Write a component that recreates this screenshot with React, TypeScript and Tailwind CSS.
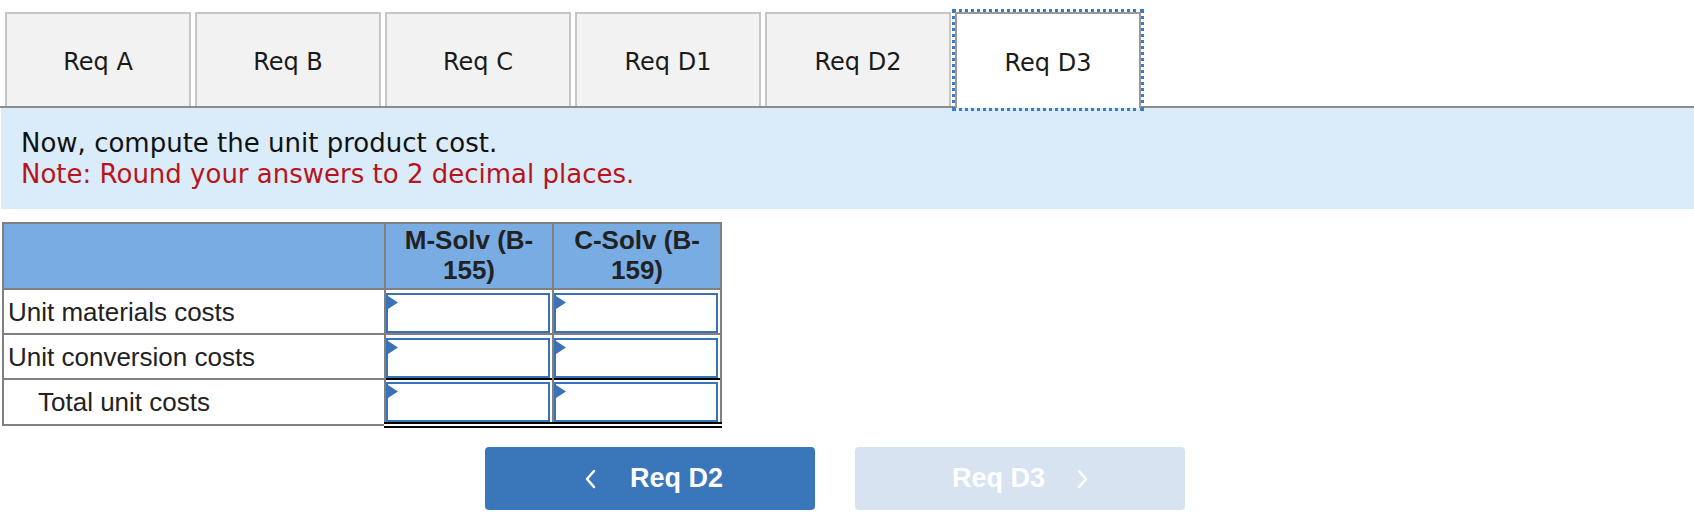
import React from "react";

const tabs = ["Req A", "Req B", "Req C", "Req D1", "Req D2", "Req D3"];

function Triangle() {
  return (
    <svg className="absolute left-0 top-[1px]" width="10" height="13" viewBox="0 0 10 13">
      <polygon points="0,0 10,6.5 0,13" fill="#3a72b8" />
    </svg>
  );
}

function InputCell({ bottom }: { bottom: "grey" | "black" | "double" }) {
  const b =
    bottom === "grey"
      ? "border-b-2 border-b-[#808080]"
      : bottom === "black"
      ? "border-b-2 border-b-black"
      : "border-b-[6px] border-double border-b-black";
  return (
    <td className={`p-0 border-x-2 border-x-[#808080] ${b}`}>
      <div className="pl-0 pr-[2px] pt-[2px] pb-0">
        <div className="relative h-[40px] border-2 border-[#3a72b8] bg-white">
          <Triangle />
        </div>
      </div>
    </td>
  );
}

export default function App() {
  return (
    <div className="w-[1694px] h-[526px] bg-white font-['DejaVu_Sans',sans-serif] overflow-hidden">
      {/* Tab bar */}
      <div className="flex gap-[4px] pl-[5px] pt-[12px] h-[108px] border-b-2 border-[#8c8c8c]">
        {tabs.map((t) => {
          const active = t === "Req D3";
          return (
            <div
              key={t}
              className={
                active
                  ? "w-[186px] h-[96px] mb-[-2px] bg-white border-2 border-b-0 border-[#999999] flex items-center justify-center text-[24px] text-[#1a1a1a] outline-[3px] outline-dotted outline-[#3a7bc8] outline-offset-[0px] relative z-10"
                  : "w-[186px] h-[94px] bg-[#f2f2f2] border-2 border-b-0 border-[#c6c6c6] flex items-center justify-center text-[24px] text-[#1a1a1a]"
              }
            >
              <span className="pt-[4px]">{t}</span>
            </div>
          );
        })}
      </div>

      {/* Instructions */}
      <div className="ml-[1px] bg-[#daebf9] pl-[20px] pt-[20px] pb-[19px] text-[26px] leading-[31px]">
        <div className="text-[#111111]">Now, compute the unit product cost.</div>
        <div className="text-[#b8141b]">Note: Round your answers to 2 decimal places.</div>
      </div>

      {/* Table */}
      <div className="pl-[2px] pt-[13px]">
        <table className="border-collapse font-['Liberation_Sans',Arial,sans-serif]">
          <thead>
            <tr className="h-[66px] bg-[#78ace3]">
              <th className="w-[382px] border-2 border-[#808080] p-0"></th>
              <th className="w-[168px] border-2 border-[#808080] p-0 pb-[2px] text-[26px] leading-[30px] font-bold text-[#222222] text-center">
                M-Solv (B-
                <br />
                155)
              </th>
              <th className="w-[168px] border-2 border-[#808080] p-0 pb-[2px] text-[26px] leading-[30px] font-bold text-[#222222] text-center">
                C-Solv (B-
                <br />
                159)
              </th>
            </tr>
          </thead>
          <tbody className="text-[26px] text-[#222222]">
            <tr className="h-[45px]">
              <td className="border-2 border-[#808080] pl-[4px] leading-[30px]">Unit materials costs</td>
              <InputCell bottom="grey" />
              <InputCell bottom="grey" />
            </tr>
            <tr className="h-[45px]">
              <td className="border-2 border-[#808080] pl-[4px] leading-[30px]">Unit conversion costs</td>
              <InputCell bottom="black" />
              <InputCell bottom="black" />
            </tr>
            <tr className="h-[45px]">
              <td className="border-2 border-[#808080] pl-[34px] leading-[30px]">Total unit costs</td>
              <InputCell bottom="double" />
              <InputCell bottom="double" />
            </tr>
          </tbody>
        </table>
      </div>

      {/* Buttons */}
      <div className="flex gap-[40px] pl-[485px] pt-[19px] font-['Liberation_Sans',Arial,sans-serif]">
        <div className="w-[330px] h-[63px] rounded-[4px] bg-[#3a76ba] flex items-center justify-center gap-[34px] pl-[8px] text-white text-[27px] font-bold">
          <svg width="11" height="20" viewBox="0 0 11 20" fill="none">
            <polyline points="9,2 2,10 9,18" stroke="white" strokeWidth="2.5" strokeLinecap="round" strokeLinejoin="round" />
          </svg>
          <span>Req D2</span>
        </div>
        <div className="w-[330px] h-[63px] rounded-[4px] bg-[#d7e3f1] flex items-center justify-center gap-[32px] text-white text-[27px] font-bold">
          <span>Req D3</span>
          <svg width="11" height="20" viewBox="0 0 11 20" fill="none">
            <polyline points="2,2 9,10 2,18" stroke="white" strokeWidth="2.5" strokeLinecap="round" strokeLinejoin="round" />
          </svg>
        </div>
      </div>
    </div>
  );
}
